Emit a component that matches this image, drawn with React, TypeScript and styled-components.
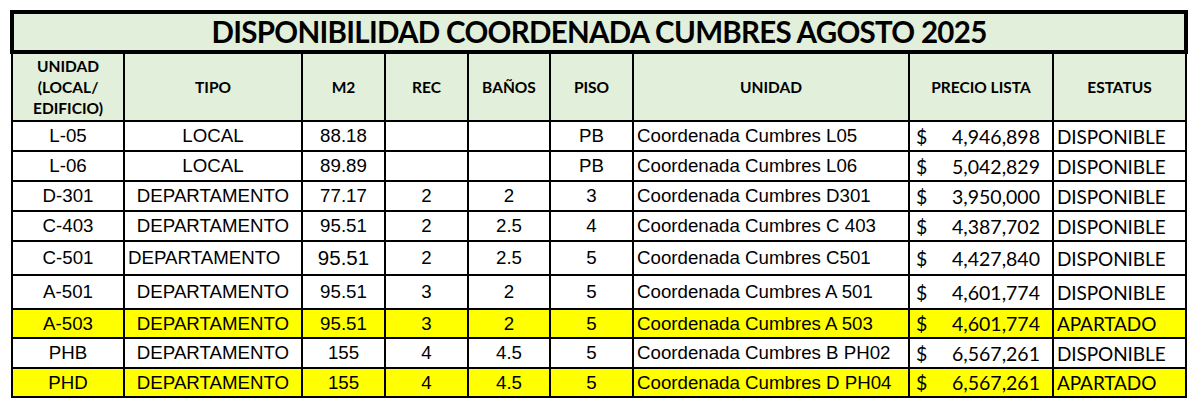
import React from "react";
import styled, { createGlobalStyle } from "styled-components";

const GlobalStyle = createGlobalStyle`
  html, body { margin: 0; padding: 0; background: #ffffff; }
  body { width: 1200px; height: 414px; overflow: hidden; }
`;

const Page = styled.div`
  padding: 10px 0 0 10px;
`;

const Sheet = styled.table`
  border-collapse: collapse;
  table-layout: fixed;
  width: 1174px;
  color: #000;
`;

const TitleCell = styled.th`
  height: 36px;
  padding: 0;
  border: 4px solid #000;
  background: #e2efda;
  font-family: Lato, "Open Sans", sans-serif;
  font-weight: 700;
  font-size: 29.5px;
  letter-spacing: -0.7px;
  text-align: center;
  vertical-align: middle;
  line-height: 36px;
`;

const HeadCell = styled.th`
  height: 66px;
  padding: 0 2px;
  border: 2px solid #000;
  background: #e2efda;
  font-family: Lato, "Open Sans", sans-serif;
  font-weight: 700;
  font-size: 15.5px;
  line-height: 21px;
  text-align: center;
  vertical-align: middle;
`;

type Align = "left" | "center";

const Row = styled.tr<{ $h: number; $hl?: boolean }>`
  height: ${(p) => p.$h}px;
  background: ${(p) => (p.$hl ? "#ffff00" : "#ffffff")};
`;

const Cell = styled.td<{ $align?: Align; $big?: boolean }>`
  padding: 0 3px;
  border: 2px solid #000;
  font-family: "Liberation Sans", Arial, sans-serif;
  font-size: ${(p) => (p.$big ? "20.5px" : "18.7px")};
  text-align: ${(p) => p.$align ?? "center"};
  vertical-align: middle;
  white-space: nowrap;
  overflow: hidden;
`;

const CalibriCell = styled.td`
  padding: 0 3px;
  border: 2px solid #000;
  font-family: Lato, "Open Sans", sans-serif;
  font-size: 19px;
  vertical-align: middle;
  white-space: nowrap;
  overflow: hidden;
`;

const Price = styled.div`
  display: flex;
  justify-content: space-between;
  padding: 0 9px 0 3px;
  font-size: 19.5px;
`;

const Status = styled.span`
  letter-spacing: -0.1px;
`;

const widths = [112, 178, 83, 83, 82, 83, 276, 144, 133];

type Unit = {
  id: string;
  tipo: string;
  m2: string;
  rec: string;
  banos: string;
  piso: string;
  nombre: string;
  precio: string;
  estatus: string;
  h: number;
  hl?: boolean;
  tipoLeft?: boolean;
  bigM2?: boolean;
};

const units: Unit[] = [
  { id: "L-05", tipo: "LOCAL", m2: "88.18", rec: "", banos: "", piso: "PB", nombre: "Coordenada Cumbres L05", precio: "4,946,898", estatus: "DISPONIBLE", h: 30 },
  { id: "L-06", tipo: "LOCAL", m2: "89.89", rec: "", banos: "", piso: "PB", nombre: "Coordenada Cumbres L06", precio: "5,042,829", estatus: "DISPONIBLE", h: 30 },
  { id: "D-301", tipo: "DEPARTAMENTO", m2: "77.17", rec: "2", banos: "2", piso: "3", nombre: "Coordenada Cumbres D301", precio: "3,950,000", estatus: "DISPONIBLE", h: 30 },
  { id: "C-403", tipo: "DEPARTAMENTO", m2: "95.51", rec: "2", banos: "2.5", piso: "4", nombre: "Coordenada Cumbres C 403", precio: "4,387,702", estatus: "DISPONIBLE", h: 30 },
  { id: "C-501", tipo: "DEPARTAMENTO", m2: "95.51", rec: "2", banos: "2.5", piso: "5", nombre: "Coordenada Cumbres C501", precio: "4,427,840", estatus: "DISPONIBLE", h: 34, tipoLeft: true, bigM2: true },
  { id: "A-501", tipo: "DEPARTAMENTO", m2: "95.51", rec: "3", banos: "2", piso: "5", nombre: "Coordenada Cumbres A 501", precio: "4,601,774", estatus: "DISPONIBLE", h: 34 },
  { id: "A-503", tipo: "DEPARTAMENTO", m2: "95.51", rec: "3", banos: "2", piso: "5", nombre: "Coordenada Cumbres A 503", precio: "4,601,774", estatus: "APARTADO", h: 29, hl: true },
  { id: "PHB", tipo: "DEPARTAMENTO", m2: "155", rec: "4", banos: "4.5", piso: "5", nombre: "Coordenada Cumbres B PH02", precio: "6,567,261", estatus: "DISPONIBLE", h: 30 },
  { id: "PHD", tipo: "DEPARTAMENTO", m2: "155", rec: "4", banos: "4.5", piso: "5", nombre: "Coordenada Cumbres D PH04", precio: "6,567,261", estatus: "APARTADO", h: 29, hl: true },
];

export default function App() {
  return (
    <>
      <GlobalStyle />
      <Page>
        <Sheet>
          <colgroup>
            {widths.map((w, i) => (
              <col key={i} style={{ width: w }} />
            ))}
          </colgroup>
          <thead>
            <tr>
              <TitleCell colSpan={9}>DISPONIBILIDAD COORDENADA CUMBRES AGOSTO 2025</TitleCell>
            </tr>
            <tr>
              <HeadCell>
                UNIDAD
                <br />
                (LOCAL/
                <br />
                EDIFICIO)
              </HeadCell>
              <HeadCell>TIPO</HeadCell>
              <HeadCell>M2</HeadCell>
              <HeadCell>REC</HeadCell>
              <HeadCell>BAÑOS</HeadCell>
              <HeadCell>PISO</HeadCell>
              <HeadCell>UNIDAD</HeadCell>
              <HeadCell>PRECIO LISTA</HeadCell>
              <HeadCell>ESTATUS</HeadCell>
            </tr>
          </thead>
          <tbody>
            {units.map((u) => (
              <Row key={u.id} $h={u.h} $hl={u.hl}>
                <Cell>{u.id}</Cell>
                <Cell $align={u.tipoLeft ? "left" : "center"}>{u.tipo}</Cell>
                <Cell $big={u.bigM2}>{u.m2}</Cell>
                <Cell>{u.rec}</Cell>
                <Cell>{u.banos}</Cell>
                <Cell>{u.piso}</Cell>
                <Cell $align="left">{u.nombre}</Cell>
                <CalibriCell>
                  <Price>
                    <span>$</span>
                    <span>{u.precio}</span>
                  </Price>
                </CalibriCell>
                <CalibriCell>
                  <Status>{u.estatus}</Status>
                </CalibriCell>
              </Row>
            ))}
          </tbody>
        </Sheet>
      </Page>
    </>
  );
}
